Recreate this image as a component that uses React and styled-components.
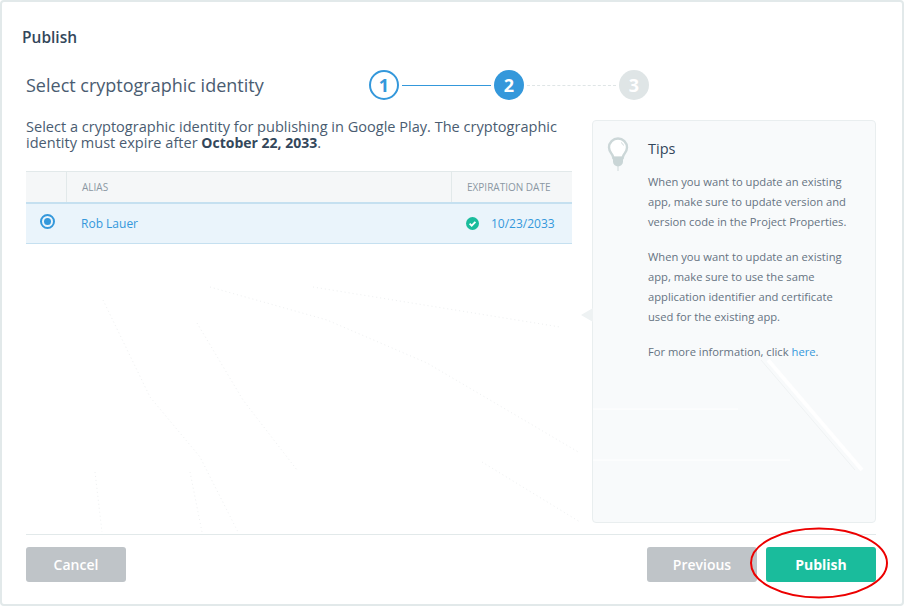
import React from "react";
import styled, { createGlobalStyle } from "styled-components";

const Global = createGlobalStyle`
  html, body { margin: 0; padding: 0; background: #fff; }
  * { box-sizing: border-box; }
  body { font-family: "Open Sans", "Liberation Sans", sans-serif; }
`;

const Dialog = styled.div`
  position: relative;
  width: 904px;
  height: 606px;
  background: #fff;
  border: 2px solid #e2e9ea;
  border-radius: 4px;
  padding: 25px 26px 22px 24px;
  display: flex;
  flex-direction: column;
  overflow: hidden;
`;

const Watermark = styled.svg`
  position: absolute;
  left: 0;
  top: 0;
  pointer-events: none;
`;

const Title = styled.div`
  margin-left: -4px;
  font-size: 15.5px;
  line-height: 20px;
  font-weight: 600;
  color: #33475b;
`;

const HeadRow = styled.div`
  display: flex;
  align-items: center;
  height: 30px;
  margin-top: 23px;
`;

const Heading = styled.h2`
  margin: 0 0 1px;
  width: 343px;
  font-size: 18px;
  line-height: 28px;
  font-weight: 400;
  color: #4a5c71;
`;

const Stepper = styled.div`
  display: flex;
  align-items: center;
`;

const Step = styled.div`
  width: 30px;
  height: 30px;
  border-radius: 50%;
  display: flex;
  align-items: center;
  justify-content: center;
  font-size: 18px;
  font-weight: 700;
  color: ${(p) => (p.$state === "done" ? "#3498db" : "#fff")};
  background: ${(p) =>
    p.$state === "done" ? "#fff" : p.$state === "active" ? "#3498db" : "#dfe5e6"};
  border: ${(p) => (p.$state === "done" ? "2px solid #3498db" : "none")};
`;

const Link = styled.div`
  width: 89px;
  margin: 0 3px;
  border-top: ${(p) => (p.$dotted ? "1px dashed #dfe5e6" : "1px solid #3498db")};
`;

const Columns = styled.div`
  display: flex;
  flex: 1;
  gap: 20px;
  margin-top: 20px;
  min-height: 0;
`;

const Main = styled.div`
  width: 546px;
  margin-top: -2px;
`;

const Intro = styled.p`
  margin: 0 0 20px;
  font-size: 14.55px;
  line-height: 16px;
  color: #4a5c71;
  b { font-size: 14px; font-weight: 700; color: #33475b; }
`;

const Table = styled.div`
  border-top: 1px solid #e2e9ea;
`;

const HeaderRow = styled.div`
  display: grid;
  grid-template-columns: 40px 1fr 121px;
  height: 32px;
  background: #f5f7f8;
  border-bottom: 2px solid #c5e0f0;
`;

const HeaderCell = styled.div`
  display: flex;
  align-items: center;
  padding-left: 15px;
  font-size: 10px;
  color: #8b97a3;
  border-left: ${(p) => (p.$first ? "none" : "1px solid #e2e9ea")};
`;

const Row = styled.div`
  display: grid;
  grid-template-columns: 40px 1fr 121px;
  align-items: center;
  height: 40px;
  background: #eaf4fb;
  border-bottom: 1px solid #c5e0f0;
`;

const Radio = styled.span`
  width: 15px;
  height: 15px;
  margin: -5px 0 0 14px;
  border: 2px solid #3498db;
  border-radius: 50%;
  display: flex;
  align-items: center;
  justify-content: center;
  &::after {
    content: "";
    width: 7px;
    height: 7px;
    border-radius: 50%;
    background: #3498db;
  }
`;

const Alias = styled.span`
  padding-left: 15px;
  font-size: 12px;
  color: #3498db;
`;

const DateCell = styled.div`
  display: flex;
  align-items: center;
  gap: 12px;
  padding-left: 15px;
  font-size: 12px;
  color: #3498db;
`;

const Tips = styled.aside`
  position: relative;
  width: 284px;
  background: #f8fafb;
  border: 1px solid #e9eeef;
  border-radius: 4px;
  padding: 18px 26px 0 55px;
  color: #667382;
  &::before {
    content: "";
    position: absolute;
    left: -12px;
    top: 187px;
    border-style: solid;
    border-width: 7px 12px 7px 0;
    border-color: transparent #eef2f3 transparent transparent;
  }
`;

const TipsStreaks = styled.svg`
  position: absolute;
  left: 0;
  top: 0;
  pointer-events: none;
`;

const BulbWrap = styled.div`
  position: absolute;
  left: 14px;
  top: 16px;
  line-height: 0;
`;

const TipsTitle = styled.div`
  font-size: 14.5px;
  line-height: 20px;
  color: #33475b;
  margin-bottom: 13px;
`;

const TipText = styled.p`
  margin: 0 0 15px;
  font-size: 11.2px;
  line-height: 20px;
  a { color: #3498db; text-decoration: none; }
`;

const Footer = styled.div`
  display: flex;
  justify-content: space-between;
  margin-top: 11px;
  padding-top: 12px;
  border-top: 1px solid #e2e9ea;
`;

const Group = styled.div`
  display: flex;
  gap: 9px;
`;

const Button = styled.button`
  width: ${(p) => p.$w}px;
  height: 35px;
  border: 0;
  border-radius: 3px;
  padding: 0;
  font-family: inherit;
  font-size: 14px;
  font-weight: ${(p) => (p.$primary ? 700 : 600)};
  color: #fff;
  background: ${(p) => (p.$primary ? "#1abc9c" : "#bfc4c8")};
`;

const Circle = styled.svg`
  position: absolute;
  left: 747px;
  top: 524px;
`;

const Bulb = () => (
  <svg width="22" height="34" viewBox="0 0 22 34">
    <path d="M11 1.5a9 9 0 0 0-9 9c0 3.6 2.2 5.4 3.4 7.6.6 1.1.8 2 .9 2.9h9.4c.1-.9.3-1.8.9-2.9 1.2-2.2 3.4-4 3.4-7.6a9 9 0 0 0-9-9z" fill="#fff" stroke="#ccd7d8" strokeWidth="2.4" />
    <path d="M6 19.5h10v5a5 5 0 0 1-10 0z" fill="#c9d5d6" />
    <path d="M11 29v5" stroke="#d0dadb" strokeWidth="1" />
    <path d="M14 5.5a5 5 0 0 1 2.5 3" stroke="#d0dadb" fill="none" />
  </svg>
);

const Check = () => (
  <svg width="13" height="13" viewBox="0 0 13 13">
    <circle cx="6.5" cy="6.5" r="6.5" fill="#1abc9c" />
    <path d="M3.6 6.6l2.1 2.1 3.7-3.9" fill="none" stroke="#fff" strokeWidth="1.8" />
  </svg>
);

export default function App() {
  return (
    <>
      <Global />
      <Dialog>
        {/* faint dotted traces behind the page */}
        <Watermark width="900" height="602">
          <g fill="none" stroke="#eef0f1" strokeWidth="1" strokeDasharray="1 3">
            <path d="M101 298L148 395L198 455L236 530" />
            <path d="M195 321L241 398L295 468" />
            <path d="M208 285L325 318L425 361L578 451" />
            <path d="M311 285L558 325" />
            <path d="M93 470L100 530" />
            <path d="M188 470L200 530" />
            <path d="M480 460L578 520" />
          </g>
        </Watermark>
        <Title>Publish</Title>
        <HeadRow>
          <Heading>Select cryptographic identity</Heading>
          <Stepper>
            <Step $state="done">1</Step>
            <Link />
            <Step $state="active">2</Step>
            <Link $dotted />
            <Step>3</Step>
          </Stepper>
        </HeadRow>
        <Columns>
          <Main>
            <Intro>
              Select a cryptographic identity for publishing in Google Play. The cryptographic
              identity must expire after <b>October 22, 2033</b>.
            </Intro>
            <Table>
              <HeaderRow>
                <HeaderCell $first />
                <HeaderCell>ALIAS</HeaderCell>
                <HeaderCell>EXPIRATION DATE</HeaderCell>
              </HeaderRow>
              <Row>
                <Radio />
                <Alias>Rob Lauer</Alias>
                <DateCell>
                  <Check />
                  10/23/2033
                </DateCell>
              </Row>
            </Table>
          </Main>
          <Tips>
            <TipsStreaks width="282" height="402">
              <path d="M175 239L269 349" stroke="#ffffff" strokeWidth="4" />
              <path d="M0 288H145M0 339H197" stroke="#ffffff" strokeWidth="1" />
              <path d="M168 239L262 349" stroke="#eff2f3" strokeWidth="1" />
            </TipsStreaks>
            <BulbWrap>
              <Bulb />
            </BulbWrap>
            <TipsTitle>Tips</TipsTitle>
            <TipText>
              When you want to update an existing app, make sure to update version and version code
              in the Project Properties.
            </TipText>
            <TipText>
              When you want to update an existing app, make sure to use the same application
              identifier and certificate used for the existing app.
            </TipText>
            <TipText>
              For more information, click <a href="#here">here</a>.
            </TipText>
          </Tips>
        </Columns>
        <Footer>
          <Button $w={100}>Cancel</Button>
          <Group>
            <Button $w={110}>Previous</Button>
            <Button $w={110} $primary>Publish</Button>
          </Group>
        </Footer>
        <Circle width="142" height="76" viewBox="0 0 142 76">
          <ellipse cx="70" cy="37" rx="68" ry="34.5" fill="none" stroke="#ec0000" strokeWidth="2" />
        </Circle>
      </Dialog>
    </>
  );
}
